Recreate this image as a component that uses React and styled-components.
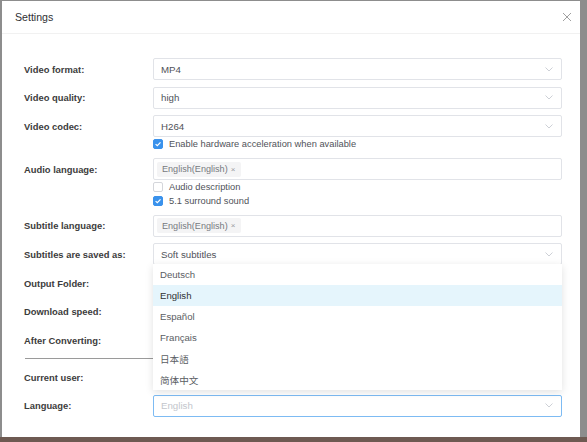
import styled, { createGlobalStyle } from "styled-components";

const GlobalStyle = createGlobalStyle`
  html, body {
    margin: 0;
    padding: 0;
    background: #8d8d8d;
  }
  * {
    box-sizing: border-box;
  }
`;

const Chevron = () => (
  <svg width="8" height="5" viewBox="0 0 8 5">
    <path d="M0.5 0.5 L4 4 L7.5 0.5" fill="none" stroke="#c0c4cc" strokeWidth="0.8" />
  </svg>
);

const Check = () => (
  <svg width="8" height="8" viewBox="0 0 8 8">
    <path d="M1.6 4.1 L3.3 5.7 L6.5 2.3" fill="none" stroke="#fff" strokeWidth="1.2" />
  </svg>
);

const languages = ["Deutsch", "English", "Español", "Français", "日本語", "简体中文"];

export default function App() {
  return (
    <>
      <GlobalStyle />
      <Screen>
        <Dialog>
          <Header>
            <Title>Settings</Title>
            <Close>
              <svg width="10" height="10" viewBox="0 0 10 10">
                <path d="M1 1 L9 9 M9 1 L1 9" stroke="#a0a0a0" strokeWidth="1" />
              </svg>
            </Close>
          </Header>
          <Body>
            <Row>
              <Label>Video format:</Label>
              <Field>
                <Select>
                  <Value>MP4</Value>
                  <Chevron />
                </Select>
              </Field>
            </Row>
            <Row>
              <Label>Video quality:</Label>
              <Field>
                <Select>
                  <Value>high</Value>
                  <Chevron />
                </Select>
              </Field>
            </Row>
            <Row>
              <Label>Video codec:</Label>
              <Field>
                <Select>
                  <Value>H264</Value>
                  <Chevron />
                </Select>
                <CheckRow>
                  <Box checked>
                    <Check />
                  </Box>
                  Enable hardware acceleration when available
                </CheckRow>
              </Field>
            </Row>
            <Row>
              <Label>Audio language:</Label>
              <Field>
                <Select>
                  <Tag>
                    English(English) <TagClose>×</TagClose>
                  </Tag>
                </Select>
                <CheckRow>
                  <Box />
                  Audio description
                </CheckRow>
                <CheckRow>
                  <Box checked>
                    <Check />
                  </Box>
                  5.1 surround sound
                </CheckRow>
              </Field>
            </Row>
            <Row>
              <Label>Subtitle language:</Label>
              <Field>
                <Select>
                  <Tag>
                    English(English) <TagClose>×</TagClose>
                  </Tag>
                </Select>
              </Field>
            </Row>
            <Row>
              <Label>Subtitles are saved as:</Label>
              <Field>
                <Select>
                  <Value>Soft subtitles</Value>
                  <Chevron />
                </Select>
                <Dropdown>
                  {languages.map((lang) => (
                    <Option key={lang} active={lang === "English"}>
                      {lang}
                    </Option>
                  ))}
                </Dropdown>
              </Field>
            </Row>
            <Row>
              <Label>Output Folder:</Label>
            </Row>
            <Row>
              <Label>Download speed:</Label>
            </Row>
            <Row>
              <Label>After Converting:</Label>
            </Row>
            <Divider />
            <Row>
              <Label>Current user:</Label>
            </Row>
            <Row>
              <Label>Language:</Label>
              <Field>
                <Select focused>
                  <Value placeholder>English</Value>
                  <Chevron />
                </Select>
              </Field>
            </Row>
          </Body>
        </Dialog>
        <BottomStrip />
      </Screen>
    </>
  );
}

const Screen = styled.div`
  width: 587px;
  height: 442px;
  padding: 1px 7px 0 2px;
  display: flex;
  flex-direction: column;
  background: #8d8d8d;
  font-family: "Liberation Sans", Arial, sans-serif;
`;

const Dialog = styled.div`
  flex: 1;
  background: #ffffff;
  display: flex;
  flex-direction: column;
  position: relative;
  z-index: 1;
`;

const BottomStrip = styled.div`
  height: 5px;
  margin: 0 -7px 0 -2px;
  background: #6e5a52;
`;

const Header = styled.div`
  height: 33px;
  border-bottom: 1px solid #f1f1f1;
  display: flex;
  align-items: center;
  justify-content: space-between;
  padding: 0 8px 0 13px;
`;

const Title = styled.div`
  font-size: 10.6px;
  color: #303133;
`;

const Close = styled.div`
  display: flex;
  align-items: center;
`;

const Body = styled.div`
  padding: 24px 18px 0 22px;
  display: flex;
  flex-direction: column;
`;

const Row = styled.div`
  display: grid;
  grid-template-columns: 129px 1fr;
  margin-bottom: 6.7px;
  min-height: 22px;
`;

const Label = styled.div`
  height: 22px;
  display: flex;
  align-items: center;
  font-size: 9.4px;
  font-weight: 700;
  color: #3c3c3c;
`;

const Field = styled.div`
  position: relative;
  display: flex;
  flex-direction: column;
`;

const Select = styled.div`
  height: 22px;
  border: 1px solid ${(p) => (p.focused ? "#7dbbf3" : "#e1e3e8")};
  border-radius: 2px;
  display: flex;
  align-items: center;
  justify-content: space-between;
  padding: 0 8px 0 7px;
  background: #fff;
`;

const Value = styled.span`
  font-size: 9.7px;
  color: ${(p) => (p.placeholder ? "#c3c6cc" : "#4f5259")};
`;

const Tag = styled.span`
  height: 15px;
  display: flex;
  align-items: center;
  gap: 3px;
  padding: 0 6px 0 5px;
  margin-left: -4px;
  background: #f4f4f5;
  border-radius: 2px;
  font-size: 9.1px;
  color: #777a80;
`;

const TagClose = styled.span`
  font-size: 8px;
  color: #9a9ca1;
`;

const CheckRow = styled.div`
  height: 14px;
  display: flex;
  align-items: center;
  gap: 6px;
  font-size: 9.3px;
  color: #505359;
`;

const Box = styled.span`
  width: 10px;
  height: 10px;
  border-radius: 2px;
  display: flex;
  align-items: center;
  justify-content: center;
  background: ${(p) => (p.checked ? "#3a92ec" : "#fff")};
  border: 1px solid ${(p) => (p.checked ? "#3a92ec" : "#d4d6db")};
`;

const Dropdown = styled.div`
  position: absolute;
  top: 21px;
  left: 0;
  right: 0;
  background: #fff;
  box-shadow: 0 2px 8px rgba(0, 0, 0, 0.12);
  z-index: 5;
  padding: 0;
`;

const Option = styled.div`
  height: 21px;
  display: flex;
  align-items: center;
  padding: 0 7px;
  font-size: 9.6px;
  font-family: "Liberation Sans", "Noto Sans CJK SC", sans-serif;
  color: ${(p) => (p.active ? "#303133" : "#5a5d63")};
  background: ${(p) => (p.active ? "#e5f5fc" : "#fff")};
`;

const Divider = styled.div`
  height: 1px;
  background: #9a9a9a;
  margin: 0 0 7px 1px;
`;
